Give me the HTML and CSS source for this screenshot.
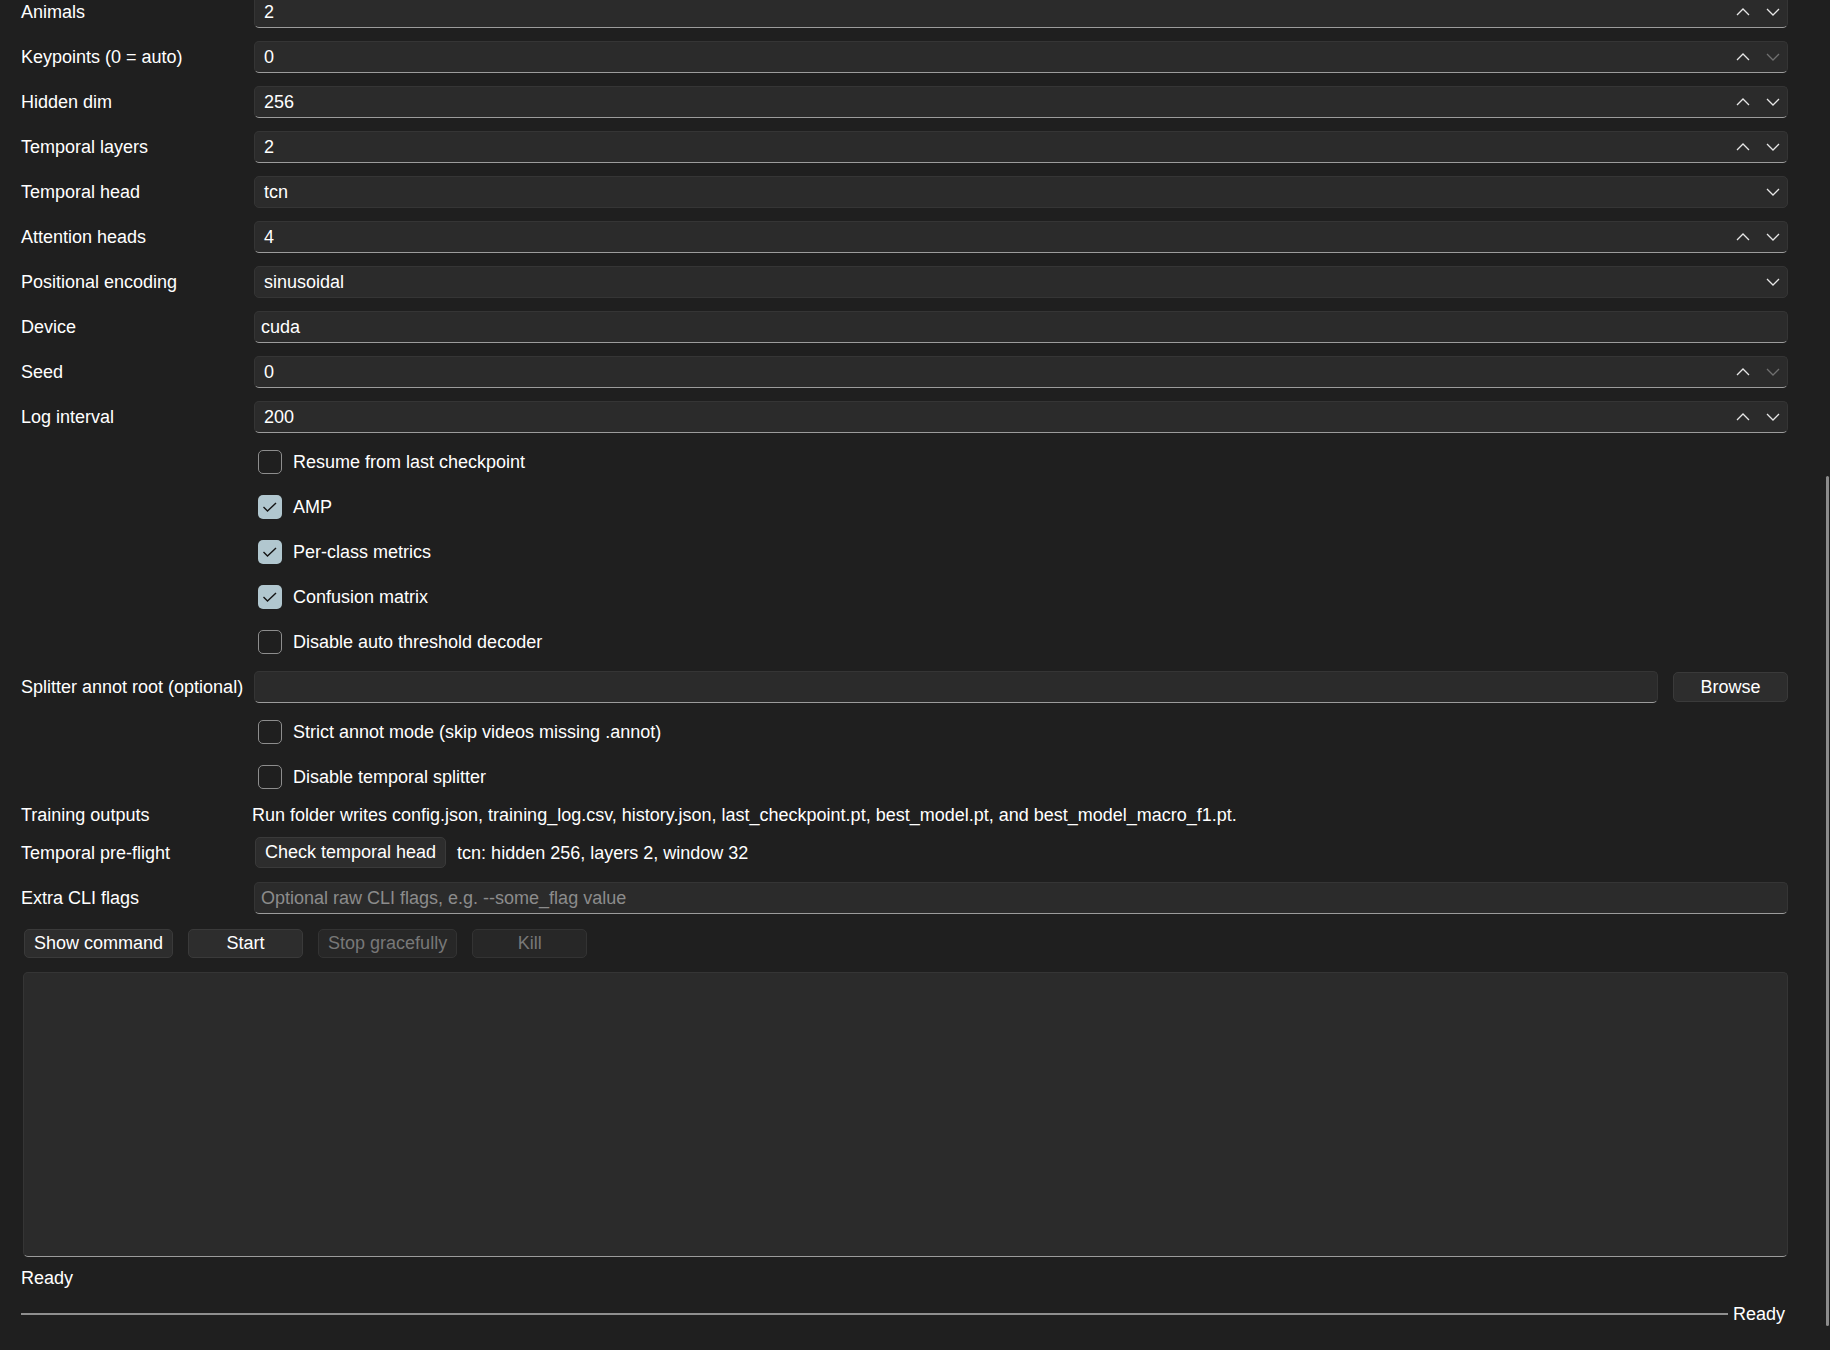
FILE: index.html
```html
<!DOCTYPE html>
<html lang="en">
  <head>
    <meta charset="UTF-8" />
    <title>Train temporal model</title>
    <link rel="stylesheet" href="styles.css">
  </head>
  <body>
    <div class="window">
      <!-- Training options -->
      <div class="form">
        <div class="lbl">Animals</div>
        <div class="field spin"><span class="val">2</span>
          <span class="arrows">
            <svg class="chev" viewBox="0 0 14 8"><path d="M1 7 L7 1 L13 7" /></svg>
            <svg class="chev" viewBox="0 0 14 8"><path d="M1 1 L7 7 L13 1" /></svg>
          </span>
        </div>

        <div class="lbl">Keypoints (0 = auto)</div>
        <div class="field spin"><span class="val">0</span>
          <span class="arrows">
            <svg class="chev" viewBox="0 0 14 8"><path d="M1 7 L7 1 L13 7" /></svg>
            <svg class="chev off" viewBox="0 0 14 8"><path d="M1 1 L7 7 L13 1" /></svg>
          </span>
        </div>

        <div class="lbl">Hidden dim</div>
        <div class="field spin"><span class="val">256</span>
          <span class="arrows">
            <svg class="chev" viewBox="0 0 14 8"><path d="M1 7 L7 1 L13 7" /></svg>
            <svg class="chev" viewBox="0 0 14 8"><path d="M1 1 L7 7 L13 1" /></svg>
          </span>
        </div>

        <div class="lbl">Temporal layers</div>
        <div class="field spin"><span class="val">2</span>
          <span class="arrows">
            <svg class="chev" viewBox="0 0 14 8"><path d="M1 7 L7 1 L13 7" /></svg>
            <svg class="chev" viewBox="0 0 14 8"><path d="M1 1 L7 7 L13 1" /></svg>
          </span>
        </div>

        <div class="lbl">Temporal head</div>
        <div class="field combo"><span class="val">tcn</span>
          <span class="arrows">
            <svg class="chev" viewBox="0 0 14 8"><path d="M1 1 L7 7 L13 1" /></svg>
          </span>
        </div>

        <div class="lbl">Attention heads</div>
        <div class="field spin"><span class="val">4</span>
          <span class="arrows">
            <svg class="chev" viewBox="0 0 14 8"><path d="M1 7 L7 1 L13 7" /></svg>
            <svg class="chev" viewBox="0 0 14 8"><path d="M1 1 L7 7 L13 1" /></svg>
          </span>
        </div>

        <div class="lbl">Positional encoding</div>
        <div class="field combo"><span class="val">sinusoidal</span>
          <span class="arrows">
            <svg class="chev" viewBox="0 0 14 8"><path d="M1 1 L7 7 L13 1" /></svg>
          </span>
        </div>

        <div class="lbl">Device</div>
        <div class="field edit"><span class="val">cuda</span></div>

        <div class="lbl">Seed</div>
        <div class="field spin"><span class="val">0</span>
          <span class="arrows">
            <svg class="chev" viewBox="0 0 14 8"><path d="M1 7 L7 1 L13 7" /></svg>
            <svg class="chev off" viewBox="0 0 14 8"><path d="M1 1 L7 7 L13 1" /></svg>
          </span>
        </div>

        <div class="lbl">Log interval</div>
        <div class="field spin"><span class="val">200</span>
          <span class="arrows">
            <svg class="chev" viewBox="0 0 14 8"><path d="M1 7 L7 1 L13 7" /></svg>
            <svg class="chev" viewBox="0 0 14 8"><path d="M1 1 L7 7 L13 1" /></svg>
          </span>
        </div>

        <div class="lbl"></div>
        <div class="check"><span class="box"></span>Resume from last checkpoint</div>

        <div class="lbl"></div>
        <div class="check"><span class="box on"><svg viewBox="0 0 24 24"><path d="M5.5 12 L9.5 16 L18 8" /></svg></span>AMP</div>

        <div class="lbl"></div>
        <div class="check"><span class="box on"><svg viewBox="0 0 24 24"><path d="M5.5 12 L9.5 16 L18 8" /></svg></span>Per-class metrics</div>

        <div class="lbl"></div>
        <div class="check"><span class="box on"><svg viewBox="0 0 24 24"><path d="M5.5 12 L9.5 16 L18 8" /></svg></span>Confusion matrix</div>

        <div class="lbl"></div>
        <div class="check"><span class="box"></span>Disable auto threshold decoder</div>

        <div class="lbl">Splitter annot root (optional)</div>
        <div class="path-row">
          <div class="field edit"></div>
          <button class="btn browse">Browse</button>
        </div>

        <div class="lbl"></div>
        <div class="check"><span class="box"></span>Strict annot mode (skip videos missing .annot)</div>

        <div class="lbl"></div>
        <div class="check"><span class="box"></span>Disable temporal splitter</div>

        <div class="lbl short">Training outputs</div>
        <div class="note short">Run folder writes config.json, training_log.csv, history.json, last_checkpoint.pt, best_model.pt, and best_model_macro_f1.pt.</div>

        <div class="lbl tall">Temporal pre-flight</div>
        <div class="preflight tall">
          <button class="btn">Check temporal head</button>
          <span>tcn: hidden 256, layers 2, window 32</span>
        </div>

        <div class="lbl lower">Extra CLI flags</div>
        <div class="field edit lower"><span class="val placeholder">Optional raw CLI flags, e.g. --some_flag value</span></div>
      </div>

      <div class="actions">
        <button class="btn">Show command</button>
        <button class="btn">Start</button>
        <button class="btn" disabled>Stop gracefully</button>
        <button class="btn" disabled>Kill</button>
      </div>

      <div class="log"></div>

      <div class="status">Ready</div>

      <div class="progress">
        <div class="track"></div>
        <span>Ready</span>
      </div>

      <div class="scrollbar"></div>
    </div>
  </body>
</html>
```

FILE: styles.css
```css
body {
  margin: 0;
  padding: 0;
  background-color: #1f1f1f;
  color: #ffffff;
  font-family: "Liberation Sans", Arial, sans-serif;
  font-size: 18px;
  line-height: 20px;
  overflow: hidden;
}
.window {
  position: relative;
  height: 1350px;
  padding: 0 42px 0 21px;
}
.form {
  display: grid;
  grid-template-columns: 233px 1fr;
  row-gap: 13px;
  margin-top: -4px;
}
.lbl {
  display: flex;
  align-items: center;
  white-space: nowrap;
}
.short {
  height: 18px;
  line-height: 18px;
}
.lower {
  margin-top: 1px;
}
.note {
  display: flex;
  align-items: center;
  margin-left: -2px;
  white-space: nowrap;
}
.field {
  box-sizing: border-box;
  height: 32px;
  display: flex;
  align-items: center;
  background-color: #2b2b2b;
  border: 1px solid #353535;
  border-radius: 5px;
}
.spin,
.edit {
  border-bottom: 1px solid #9c9c9c;
}
.field .val {
  flex: 1;
  padding-left: 9px;
}
.edit .val {
  padding-left: 6px;
}
.placeholder {
  color: #8c8c8c;
}
.arrows {
  display: flex;
  gap: 16px;
  padding-right: 7px;
}
.chev {
  width: 14px;
  height: 8px;
  fill: none;
  stroke: #e6e6e6;
  stroke-width: 1.3;
}
.chev.off {
  stroke: #707070;
}
.check {
  display: flex;
  align-items: center;
  gap: 11px;
  height: 32px;
  padding-left: 4px;
}
.box {
  box-sizing: border-box;
  width: 24px;
  height: 24px;
  border: 1.5px solid #8d8d8d;
  border-radius: 5px;
}
.box.on {
  background-color: #b1c7cf;
  border: none;
}
.box svg {
  width: 24px;
  height: 24px;
  fill: none;
  stroke: #151515;
  stroke-width: 1.4;
}
.path-row {
  display: flex;
  align-items: center;
  gap: 15px;
  height: 32px;
}
.path-row .field {
  flex: 1;
}
.btn {
  box-sizing: border-box;
  height: 30px;
  min-width: 115px;
  padding: 0 9px;
  background-color: #2d2d2d;
  color: #ffffff;
  border: 1px solid #3a3a3a;
  border-radius: 5px;
  font-family: inherit;
  font-size: 18px;
}
.btn:disabled {
  background-color: #272727;
  color: #787878;
  border-color: #333333;
}
.browse {
  width: 115px;
}
.tall {
  height: 31px;
}
.preflight {
  display: flex;
  align-items: center;
  gap: 11px;
  margin-left: 1px;
}
.preflight .btn {
  height: 31px;
}
.actions {
  display: flex;
  gap: 15px;
  margin: 15px 0 0 3px;
}
.actions .btn {
  height: 29px;
}
.log {
  box-sizing: border-box;
  height: 285px;
  margin: 14px 0 0 2px;
  background-color: #2b2b2b;
  border: 1px solid #353535;
  border-bottom: 1px solid #9c9c9c;
  border-radius: 5px;
}
.status {
  margin-top: 12px;
  height: 18px;
  line-height: 18px;
}
.progress {
  display: flex;
  align-items: center;
  gap: 5px;
  margin-top: 17px;
  height: 20px;
}
.track {
  flex: 1;
  height: 2px;
  background-color: #8f8f8f;
}
.progress span {
  padding-right: 3px;
}
.scrollbar {
  position: absolute;
  top: 480px;
  right: 1px;
  width: 3px;
  height: 850px;
  border-radius: 2px;
  background-color: #8b8b8b;
}
```
